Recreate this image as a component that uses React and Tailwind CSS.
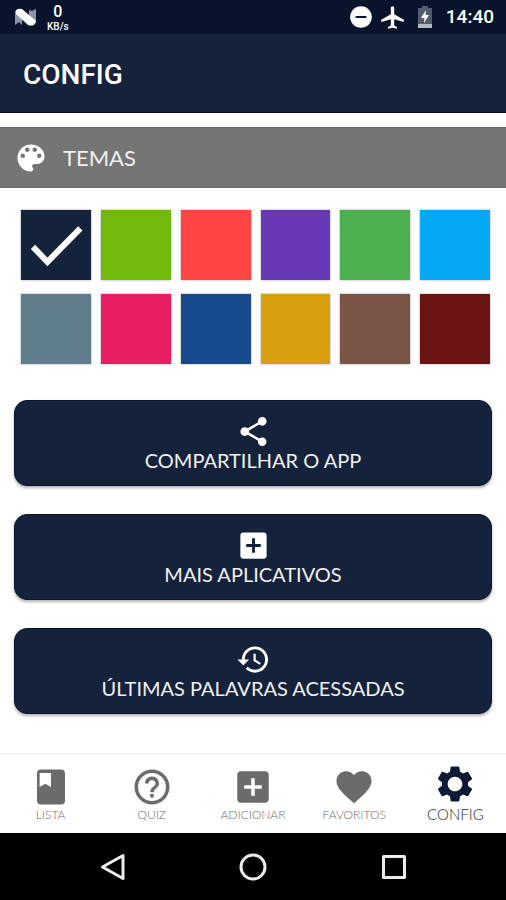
import { useState } from "react";

const PATHS = {
  palette:
    "M12 3c-4.97 0-9 4.03-9 9s4.03 9 9 9c.83 0 1.5-.67 1.5-1.5 0-.39-.15-.74-.39-1.01-.23-.26-.38-.61-.38-.99 0-.83.67-1.5 1.5-1.5H16c2.76 0 5-2.24 5-5 0-4.42-4.03-8-9-8zm-5.5 9c-.83 0-1.5-.67-1.5-1.5S5.67 9 6.5 9 8 9.67 8 10.500 7.330 12 6.500 12zm3-4C8.670 8 8 7.330 8 6.500S8.670 5 9.500 5s1.500.670 1.500 1.500S10.330 8 9.500 8zm5 0c-.83 0-1.500-.670-1.500-1.500S13.670 5 14.500 5s1.500.670 1.500 1.500S15.330 8 14.500 8zm3 4c-.83 0-1.500-.670-1.500-1.500S16.670 9 17.500 9s1.500.670 1.500 1.500-.670 1.500-1.500 1.500z",
  share:
    "M18 16.080c-.76 0-1.440.300-1.960.770L8.910 12.700c.050-.230.090-.460.090-.700s-.040-.470-.090-.700l7.050-4.110c.540.500 1.250.810 2.040.810 1.660 0 3-1.340 3-3s-1.340-3-3-3-3 1.340-3 3c0 .240.040.470.090.700L8.040 9.810C7.500 9.310 6.790 9 6 9c-1.660 0-3 1.340-3 3s1.340 3 3 3c.790 0 1.500-.310 2.040-.810l7.120 4.160c-.050.210-.080.430-.080.650 0 1.610 1.310 2.920 2.920 2.920s2.920-1.310 2.920-2.920-1.310-2.920-2.920-2.920z",
  plus: "M19 3H5c-1.110 0-2 .9-2 2v14c0 1.100.890 2 2 2h14c1.100 0 2-.9 2-2V5c0-1.100-.9-2-2-2zm-2 10h-4v4h-2v-4H7v-2h4V7h2v4h4v2z",
  history:
    "M13 3c-4.970 0-9 4.030-9 9H1l3.890 3.890.070.140L9 12H6c0-3.870 3.130-7 7-7s7 3.130 7 7-3.130 7-7 7c-1.930 0-3.680-.790-4.940-2.060l-1.420 1.420C8.270 19.990 10.510 21 13 21c4.970 0 9-4.030 9-9s-4.030-9-9-9zm-1 5v5l4.280 2.540.720-1.210-3.500-2.080V8H12z",
  book: "M18 2H6c-1.100 0-2 .9-2 2v16c0 1.100.9 2 2 2h12c1.100 0 2-.9 2-2V4c0-1.100-.9-2-2-2zM5.500 4h6.500v8l-3.250-1.800L5.500 12V4z",
  quiz: "M11 18h2v-2h-2v2zm1-16C6.480 2 2 6.480 2 12s4.480 10 10 10 10-4.480 10-10S17.520 2 12 2zm0 18c-4.410 0-8-3.590-8-8s3.590-8 8-8 8 3.590 8 8-3.590 8-8 8zm0-14c-2.210 0-4 1.790-4 4h2c0-1.100.9-2 2-2s2 .9 2 2c0 2-3 1.750-3 5h2c0-2.250 3-2.500 3-5 0-2.210-1.790-4-4-4z",
  heart:
    "M12 21.350l-1.450-1.320C5.400 15.360 2 12.280 2 8.500 2 5.420 4.420 3 7.500 3c1.740 0 3.410.810 4.500 2.090C13.090 3.810 14.760 3 16.500 3 19.580 3 22 5.420 22 8.500c0 3.780-3.400 6.860-8.550 11.540L12 21.350z",
  gear: "M19.430 12.980c.040-.320.070-.640.070-.980s-.030-.660-.070-.980l2.110-1.650c.190-.150.240-.420.120-.640l-2-3.460c-.120-.220-.390-.300-.610-.220l-2.490 1c-.520-.400-1.080-.730-1.690-.980l-.380-2.650C14.460 2.180 14.250 2 14 2h-4c-.250 0-.460.180-.490.420l-.380 2.650c-.610.250-1.170.590-1.690.980l-2.490-1c-.230-.090-.490 0-.610.220l-2 3.460c-.130.220-.070.490.120.640l2.110 1.650c-.040.320-.070.650-.070.980s.030.660.070.980l-2.110 1.650c-.190.150-.240.420-.120.640l2 3.460c.120.220.390.300.610.220l2.490-1c.520.400 1.080.730 1.690.980l.380 2.650c.030.240.240.420.490.420h4c.250 0 .460-.180.490-.420l.380-2.650c.610-.250 1.170-.590 1.690-.980l2.490 1c.230.090.490 0 .610-.220l2-3.460c.120-.220.070-.490-.120-.640l-2.110-1.650zM12 16.200c-2.300 0-4.200-1.900-4.200-4.200s1.900-4.200 4.200-4.200 4.200 1.900 4.200 4.200-1.900 4.200-4.200 4.200z",
  dnd: "M12 2C6.480 2 2 6.480 2 12s4.480 10 10 10 10-4.480 10-10S17.520 2 12 2zm5 11H7v-2h10v2z",
  plane:
    "M22 16v-2l-8.500-5V3.500c0-.830-.670-1.500-1.500-1.500s-1.500.670-1.500 1.500V9L2 14v2l8.500-2.500V19L8 20.500V22l4-1 4 1v-1.500L13.500 19v-5.500L22 16z",
};

function Icon({ name, className }) {
  return (
    <svg viewBox="0 0 24 24" fill="currentColor" aria-hidden="true" className={className}>
      <path d={PATHS[name]} />
    </svg>
  );
}

const THEMES = [
  { name: "Azul-marinho", color: "bg-[#15223b]" },
  { name: "Verde-limão", color: "bg-[#71ba0b]" },
  { name: "Coral", color: "bg-[#ff4444]" },
  { name: "Roxo", color: "bg-[#6739b6]" },
  { name: "Verde", color: "bg-[#4caf50]" },
  { name: "Azul-claro", color: "bg-[#03a9f4]" },
  { name: "Cinza-azulado", color: "bg-[#607d8b]" },
  { name: "Rosa", color: "bg-[#e91e63]" },
  { name: "Azul", color: "bg-[#174a8c]" },
  { name: "Dourado", color: "bg-[#d8a010]" },
  { name: "Marrom", color: "bg-[#795548]" },
  { name: "Vinho", color: "bg-[#6b1212]" },
];

const ACTIONS = [
  { icon: "share", label: "COMPARTILHAR O APP" },
  { icon: "plus", label: "MAIS APLICATIVOS" },
  { icon: "history", label: "ÚLTIMAS PALAVRAS ACESSADAS" },
];

const TABS = [
  { icon: "book", label: "LISTA" },
  { icon: "quiz", label: "QUIZ" },
  { icon: "plus", label: "ADICIONAR" },
  { icon: "heart", label: "FAVORITOS" },
  { icon: "gear", label: "CONFIG", active: true },
];

function StatusBar() {
  return (
    <div className="flex h-[34px] items-center bg-[#07142b] pr-3 pl-[15px] font-[Roboto,sans-serif] text-white">
      <svg viewBox="0 0 21 18" aria-hidden="true" className="h-[18px] w-[21px]">
        <path d="M0 3l4-2 3 3v13l-3-3-4 3zM14 2l3 1 4-2v14l-4 2-3-2z" fill="#8f96a3" />
        <path d="M1 2q3-2 6-1l14 12-2 4q-3 1-6 0L1 6z" fill="#fff" />
      </svg>
      <div className="ml-[11px] flex flex-col items-center font-medium">
        <span className="text-base leading-[19px]">0</span>
        <span className="text-[10px] leading-3">KB/s</span>
      </div>
      <div className="ml-auto flex items-center">
        <Icon name="dnd" className="size-[26px]" />
        <Icon name="plane" className="ml-[5px] size-[27px]" />
        <svg viewBox="0 0 14 22" aria-hidden="true" className="ml-3 h-[22px] w-[14px]">
          <path d="M4 0h6v2h4v16H0V2h4z" fill="#525c6d" />
          <path d="M0 18h14v4H0z" fill="#b5b9c0" />
          <path d="M8 4L3 12h3.500L6 17l5-8H7.500z" fill="#fff" />
        </svg>
        <span className="ml-[14px] text-[19px] leading-6 font-medium">14:40</span>
      </div>
    </div>
  );
}

function ThemePicker() {
  const [selected, setSelected] = useState(THEMES[0].name);
  return (
    <div
      role="radiogroup"
      aria-label="Temas"
      className="grid grid-cols-6 gap-x-[10px] gap-y-[14px] pt-[22px] pr-4 pl-[21px]"
    >
      {THEMES.map((theme) => (
        <label key={theme.name} className="grid aspect-square cursor-pointer">
          <input
            type="radio"
            name="theme"
            aria-label={theme.name}
            checked={selected === theme.name}
            onChange={() => setSelected(theme.name)}
            className={`col-start-1 row-start-1 size-full cursor-pointer appearance-none shadow-[0_0_2px_rgba(0,0,0,0.4)] ${theme.color}`}
          />
          {selected === theme.name && (
            <svg
              viewBox="0 0 70 70"
              fill="none"
              stroke="#fff"
              strokeWidth="6"
              aria-hidden="true"
              className="pointer-events-none col-start-1 row-start-1 size-full"
            >
              <path d="M12 37L26.500 52L59.500 18.500" />
            </svg>
          )}
        </label>
      ))}
    </div>
  );
}

export default function App() {
  return (
    <div className="flex min-h-screen flex-col bg-white font-[Lato,sans-serif]">
      <StatusBar />
      <header className="flex h-[79px] items-center border-b border-[#050d1e] bg-[#15223b] px-[23px] pt-1">
        <h1 className="font-[Roboto,sans-serif] text-[28px] leading-8 font-medium text-white">CONFIG</h1>
      </header>

      <main className="flex flex-1 flex-col pt-[14px]">
        <h2 className="flex h-[61px] items-center border-y border-[#666666] bg-[#757575] pl-[13px] text-[22px] text-[#f0f0f0]">
          <Icon name="palette" className="mr-[14px] size-9 text-white" />
          TEMAS
        </h2>
        <ThemePicker />
        <div className="flex flex-col gap-7 pt-9 pr-[14px] pb-9 pl-[14px]">
          {ACTIONS.map((action) => (
            <button
              key={action.label}
              type="button"
              className="flex h-[86px] flex-col items-center justify-center rounded-[13px] border border-[#07142b] bg-[#15223b] text-xl leading-[22px] text-[#f0f0f0] shadow-[0_2px_3px_rgba(0,0,0,0.3)]"
            >
              <Icon name={action.icon} className="size-[35px] text-white" />
              {action.label}
            </button>
          ))}
        </div>
      </main>

      <nav className="grid h-20 grid-cols-5 border-t border-[#e8e8e8] bg-white">
        {TABS.map((tab) => (
          <button
            key={tab.label}
            type="button"
            aria-current={tab.active ? "page" : undefined}
            className={
              tab.active
                ? "flex flex-col items-center pt-[9px] text-[15px] leading-[18px] font-light text-[#2c2c2c]"
                : "flex flex-col items-center pt-3 text-xs leading-[14px] font-light text-[#6c6c6c]"
            }
          >
            <Icon name={tab.icon} className={tab.active ? "size-[42px] text-[#0c1a36]" : "size-[42px] text-[#6b6b6b]"} />
            {tab.label}
          </button>
        ))}
      </nav>

      <div className="flex h-[67px] items-center justify-center gap-[113px] bg-black">
        <button type="button" aria-label="Voltar">
          <svg viewBox="0 0 28 28" fill="none" stroke="#ececec" strokeWidth="3" strokeLinejoin="round" className="size-7">
            <path d="M25 2.500V25.500L4.500 14z" />
          </svg>
        </button>
        <button type="button" aria-label="Início">
          <svg viewBox="0 0 28 28" fill="none" stroke="#ececec" strokeWidth="3" className="size-7">
            <circle cx="14" cy="14" r="12" />
          </svg>
        </button>
        <button type="button" aria-label="Recentes">
          <svg viewBox="0 0 28 28" fill="none" stroke="#ececec" strokeWidth="3" strokeLinejoin="round" className="size-7">
            <rect x="3.500" y="3.500" width="21" height="21" />
          </svg>
        </button>
      </div>
    </div>
  );
}
